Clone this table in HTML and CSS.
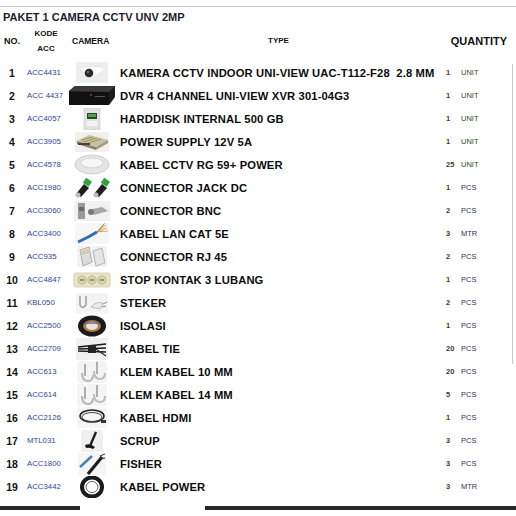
FILE: index.html
```html
<!DOCTYPE html>
<html>
<head>
<meta charset="utf-8">
<link rel="stylesheet" href="styles.css">
</head>
<body>
<div class="sheet">
  <div class="topline"></div>
  <div class="title">PAKET 1 CAMERA CCTV UNV 2MP</div>
  <table class="grid">
    <colgroup>
      <col class="c-no"><col class="c-code"><col class="c-cam"><col class="c-type"><col class="c-qn"><col class="c-unit">
    </colgroup>
    <thead>
      <tr>
        <th class="h-no">NO.</th>
        <th class="h-code">KODE<br>ACC</th>
        <th class="h-cam">CAMERA</th>
        <th class="h-type">TYPE</th>
        <th class="h-qty" colspan="2">QUANTITY</th>
      </tr>
    </thead>
    <tbody>
      <tr><td class="no">1</td><td class="code">ACC4431</td><td class="cam">
        <svg width="32" height="21" viewBox="0 0 32 21"><rect width="32" height="21" fill="#eeeeee"/><path d="M3 6 Q16 2 29 6 L27 9 Q16 20 5 9 Z" fill="#fbfbfb" stroke="#d8d8d8" stroke-width="0.6"/><circle cx="13" cy="11" r="4.3" fill="#2c2c2c"/><circle cx="12" cy="10" r="1.3" fill="#6a6a6a"/></svg>
      </td><td class="type">KAMERA CCTV INDOOR UNI-VIEW UAC-T112-F28&nbsp; 2.8 MM</td><td class="qn">1</td><td class="unit">UNIT</td></tr>
      <tr><td class="no">2</td><td class="code">ACC 4437</td><td class="cam">
        <svg width="46" height="21" viewBox="0 0 46 21"><path d="M0 6 L6 1 L46 1 L46 12 L40 20 L0 20 Z" fill="#1c1c1c"/><path d="M0 6 L6 1 L46 1 L40 7 Z" fill="#3a3a3a"/><path d="M0 7 L40 7 L40 20 L0 20 Z" fill="#111"/><circle cx="22" cy="10" r="0.9" fill="#c03030"/><rect x="26" y="11" width="10" height="1" fill="#555"/></svg>
      </td><td class="type">DVR 4 CHANNEL UNI-VIEW XVR 301-04G3</td><td class="qn">1</td><td class="unit">UNIT</td></tr>
      <tr><td class="no">3</td><td class="code">ACC4057</td><td class="cam">
        <svg width="18" height="22" viewBox="0 0 18 22"><rect x="1" y="0" width="16" height="22" fill="#e2e2e2" stroke="#c4c4c4" stroke-width="0.6"/><rect x="4" y="5" width="10" height="6" fill="#3a3a3a"/><rect x="5" y="6" width="8" height="3" fill="#3fae3a"/><rect x="4" y="13" width="10" height="5" fill="#f4f4f4"/></svg>
      </td><td class="type">HARDDISK INTERNAL 500 GB</td><td class="qn">1</td><td class="unit">UNIT</td></tr>
      <tr><td class="no">4</td><td class="code">ACC3905</td><td class="cam">
        <svg width="34" height="20" viewBox="0 0 34 20"><rect width="34" height="20" fill="#f2f0ea"/><path d="M2 9 L14 3 L33 8 L21 15 Z" fill="#c8c2a0"/><path d="M2 9 L21 15 L21 18 L2 12 Z" fill="#8c8470"/><path d="M21 15 L33 8 L33 11 L21 18 Z" fill="#a39c82"/><path d="M6 8 L18 5 M8 10 L22 6 M10 12 L26 7" stroke="#8a7a40" stroke-width="0.7"/><rect x="3" y="11" width="12" height="2" fill="#444"/></svg>
      </td><td class="type">POWER SUPPLY 12V 5A</td><td class="qn">1</td><td class="unit">UNIT</td></tr>
      <tr><td class="no">5</td><td class="code">ACC4578</td><td class="cam">
        <svg width="36" height="21" viewBox="0 0 36 21"><ellipse cx="18" cy="10.5" rx="17" ry="9.5" fill="#e6e6e6" stroke="#cfcfcf"/><ellipse cx="18" cy="9" rx="11" ry="5" fill="#f7f7f7" stroke="#d4d4d4"/></svg>
      </td><td class="type">KABEL CCTV RG 59+ POWER</td><td class="qn">25</td><td class="unit">UNIT</td></tr>
      <tr><td class="no">6</td><td class="code">ACC1980</td><td class="cam">
        <svg width="36" height="21" viewBox="0 0 36 21"><g><path d="M2 17 L10 7 L15 11 L7 20 Z" fill="#1e1e1e"/><rect x="10" y="2" width="7" height="6" fill="#2fa43a" transform="rotate(35 13 5)"/><circle cx="4" cy="18" r="2.5" fill="#bdbdbd"/></g><g transform="translate(18 0)"><path d="M2 17 L10 7 L15 11 L7 20 Z" fill="#1e1e1e"/><rect x="10" y="2" width="7" height="6" fill="#2fa43a" transform="rotate(35 13 5)"/><circle cx="4" cy="18" r="2.5" fill="#bdbdbd"/></g></svg>
      </td><td class="type">CONNECTOR JACK DC</td><td class="qn">1</td><td class="unit u2">PCS</td></tr>
      <tr><td class="no">7</td><td class="code">ACC3060</td><td class="cam">
        <svg width="36" height="20" viewBox="0 0 36 20"><rect width="36" height="20" fill="#f1f1f1"/><rect x="4" y="2" width="7" height="16" fill="#9a9a9a"/><rect x="5" y="6" width="5" height="4" fill="#6a6a6a"/><path d="M14 9 L28 6 L34 10 L20 14 Z" fill="#a8a8a8"/><circle cx="17" cy="11" r="3" fill="#777"/></svg>
      </td><td class="type">CONNECTOR BNC</td><td class="qn">2</td><td class="unit u2">PCS</td></tr>
      <tr><td class="no">8</td><td class="code">ACC3400</td><td class="cam">
        <svg width="34" height="21" viewBox="0 0 34 21"><rect width="34" height="21" fill="#f6f6f6"/><path d="M3 19 Q14 14 22 9" stroke="#2f6fc0" stroke-width="3" fill="none"/><path d="M22 9 L31 2 M22 9 L32 5 M22 9 L30 0 M22 9 L33 8" stroke="#e58a3a" stroke-width="0.8"/><path d="M22 9 L29 1" stroke="#3aa04a" stroke-width="0.8"/></svg>
      </td><td class="type">KABEL LAN CAT 5E</td><td class="qn">3</td><td class="unit u2">MTR</td></tr>
      <tr><td class="no">9</td><td class="code">ACC935</td><td class="cam">
        <svg width="30" height="21" viewBox="0 0 30 21"><rect width="30" height="21" fill="#f2f2f2"/><path d="M3 4 L12 1 L15 16 L6 20 Z" fill="#dcdcdc" stroke="#9a9a9a" stroke-width="0.7"/><path d="M16 5 L25 2 L28 17 L19 20 Z" fill="#e4e4e4" stroke="#a0a0a0" stroke-width="0.7"/><path d="M5 6 L11 4 M5 8 L12 6" stroke="#c9a040" stroke-width="0.6"/></svg>
      </td><td class="type">CONNECTOR RJ 45</td><td class="qn">2</td><td class="unit u2">PCS</td></tr>
      <tr><td class="no">10</td><td class="code">ACC4847</td><td class="cam">
        <svg width="38" height="20" viewBox="0 0 38 20"><rect x="1" y="3" width="36" height="14" rx="2" fill="#e8e4c6" stroke="#c9c4a0" stroke-width="0.7"/><circle cx="9" cy="10" r="4.2" fill="#d8d2a8" stroke="#a9a27a" stroke-width="0.6"/><circle cx="19" cy="10" r="4.2" fill="#d8d2a8" stroke="#a9a27a" stroke-width="0.6"/><circle cx="29" cy="10" r="4.2" fill="#d8d2a8" stroke="#a9a27a" stroke-width="0.6"/><circle cx="8" cy="10" r="0.9" fill="#777"/><circle cx="10" cy="10" r="0.9" fill="#777"/><circle cx="18" cy="10" r="0.9" fill="#777"/><circle cx="20" cy="10" r="0.9" fill="#777"/><circle cx="28" cy="10" r="0.9" fill="#777"/><circle cx="30" cy="10" r="0.9" fill="#777"/></svg>
      </td><td class="type">STOP KONTAK 3 LUBANG</td><td class="qn">1</td><td class="unit u2">PCS</td></tr>
      <tr><td class="no">11</td><td class="code">KBL050</td><td class="cam">
        <svg width="32" height="20" viewBox="0 0 32 20"><rect width="32" height="20" fill="#f3f3f3"/><path d="M4 3 L4 12 Q6 17 10 12 L10 3" stroke="#9a9a9a" fill="none" stroke-width="1.4"/><path d="M15 14 Q20 8 27 10 L24 16 Z" fill="#e9e9e9" stroke="#a9a9a9" stroke-width="0.7"/><path d="M27 11 L31 9 M26 14 L30 13" stroke="#888" stroke-width="0.9"/></svg>
      </td><td class="type">STEKER</td><td class="qn">2</td><td class="unit u2">PCS</td></tr>
      <tr><td class="no">12</td><td class="code">ACC2500</td><td class="cam">
        <svg width="30" height="22" viewBox="0 0 30 22"><ellipse cx="15" cy="11" rx="14" ry="10.5" fill="#1b1b1b"/><ellipse cx="15" cy="11" rx="9" ry="6" fill="#a47a4a"/><ellipse cx="15" cy="11" rx="6" ry="4" fill="#eae0cc"/><path d="M8 8 L22 8" stroke="#3b5fb0" stroke-width="1.2"/></svg>
      </td><td class="type">ISOLASI</td><td class="qn">1</td><td class="unit u2">PCS</td></tr>
      <tr><td class="no">13</td><td class="code">ACC2709</td><td class="cam">
        <svg width="32" height="22" viewBox="0 0 32 22"><rect width="32" height="22" fill="#f0f0f0"/><path d="M2 9 L30 6 M2 11 L30 10 M2 13 L30 14" stroke="#1a1a1a" stroke-width="1.4"/><rect x="12" y="7" width="8" height="8" fill="#222"/><path d="M20 11 L30 18" stroke="#2a2a2a" stroke-width="1.2"/></svg>
      </td><td class="type">KABEL TIE</td><td class="qn">20</td><td class="unit u2">PCS</td></tr>
      <tr><td class="no">14</td><td class="code">ACC613</td><td class="cam">
        <svg width="30" height="22" viewBox="0 0 30 22"><rect width="30" height="22" fill="#f4f4f4"/><path d="M5 12 Q5 20 11 20 Q16 20 16 14" stroke="#b7b7b7" stroke-width="2" fill="none"/><path d="M17 10 Q17 18 23 18 Q28 18 28 12" stroke="#bdbdbd" stroke-width="2" fill="none"/><path d="M8 3 L8 15 M20 1 L20 13" stroke="#8a8a8a" stroke-width="1.3"/></svg>
      </td><td class="type">KLEM KABEL 10 MM</td><td class="qn">20</td><td class="unit u2">PCS</td></tr>
      <tr><td class="no">15</td><td class="code">ACC614</td><td class="cam">
        <svg width="30" height="22" viewBox="0 0 30 22"><rect width="30" height="22" fill="#f4f4f4"/><path d="M5 12 Q5 20 11 20 Q16 20 16 14" stroke="#b7b7b7" stroke-width="2" fill="none"/><path d="M17 10 Q17 18 23 18 Q28 18 28 12" stroke="#bdbdbd" stroke-width="2" fill="none"/><path d="M8 3 L8 15 M20 1 L20 13" stroke="#8a8a8a" stroke-width="1.3"/></svg>
      </td><td class="type">KLEM KABEL 14 MM</td><td class="qn">5</td><td class="unit u2">PCS</td></tr>
      <tr><td class="no">16</td><td class="code">ACC2126</td><td class="cam">
        <svg width="30" height="21" viewBox="0 0 30 21"><rect width="30" height="21" fill="#f6f6f6"/><ellipse cx="15" cy="9" rx="12" ry="6" fill="none" stroke="#222" stroke-width="1.5"/><ellipse cx="15" cy="10" rx="10" ry="4.5" fill="none" stroke="#444" stroke-width="1"/><rect x="24" y="13" width="5" height="3" fill="#333"/></svg>
      </td><td class="type">KABEL HDMI</td><td class="qn">1</td><td class="unit u2">PCS</td></tr>
      <tr><td class="no">17</td><td class="code">MTL031</td><td class="cam">
        <svg width="22" height="22" viewBox="0 0 22 22"><rect width="22" height="22" fill="#f0f0f0"/><path d="M15 2 L9 16" stroke="#222" stroke-width="2.4"/><path d="M4 15 Q9 13 14 17 L12 19 Q8 17 5 18 Z" fill="#1a1a1a"/></svg>
      </td><td class="type">SCRUP</td><td class="qn">3</td><td class="unit u2">PCS</td></tr>
      <tr><td class="no">18</td><td class="code">ACC1800</td><td class="cam">
        <svg width="28" height="22" viewBox="0 0 28 22"><rect width="28" height="22" fill="#f5f5f5"/><path d="M2 14 L14 3" stroke="#4a7fb5" stroke-width="2.4"/><path d="M10 21 L24 4" stroke="#1b1b1b" stroke-width="3.2"/><path d="M22 3 L27 1 M23 6 L27 5" stroke="#333" stroke-width="1"/></svg>
      </td><td class="type">FISHER</td><td class="qn">3</td><td class="unit u2">PCS</td></tr>
      <tr><td class="no">19</td><td class="code">ACC3442</td><td class="cam">
        <svg width="24" height="22" viewBox="0 0 24 22"><ellipse cx="12" cy="11" rx="10" ry="9.5" fill="none" stroke="#1a1a1a" stroke-width="4"/><ellipse cx="12" cy="11" rx="6" ry="5.5" fill="none" stroke="#444" stroke-width="0.8"/></svg>
      </td><td class="type">KABEL POWER</td><td class="qn">3</td><td class="unit u2">MTR</td></tr>
    </tbody>
  </table>
  <div class="rightline"></div>
  <div class="bottombar">
    <div class="bar bar-a"></div>
    <div class="bar bar-gap"></div>
    <div class="bar bar-b"></div>
  </div>
</div>
</body>
</html>
```

FILE: styles.css
```css
html, body {
  margin: 0;
  padding: 0;
  background: #ffffff;
}
body {
  width: 516px;
  height: 516px;
  overflow: hidden;
  font-family: "Liberation Sans", Arial, sans-serif;
  color: #111;
}
.sheet {
  position: relative;
  width: 516px;
  height: 516px;
}
.topline {
  height: 6px;
  border-bottom: 1px solid #cfcfcf;
}
.title {
  margin: 4px 0 0 3px;
  font-weight: bold;
  font-size: 11px;
  line-height: 12px;
  color: #1c1c30;
}
.grid {
  border-collapse: collapse;
  table-layout: fixed;
  width: 516px;
  margin-top: 2px;
}
.c-no { width: 24px; }
.c-code { width: 42px; }
.c-cam { width: 51px; }
.c-type { width: 326px; }
.c-qn { width: 15px; }
.c-unit { width: 58px; }
th {
  font-weight: bold;
  padding: 0 0 5px 0;
  height: 31px;
  vertical-align: middle;
  color: #111;
}
.h-no { font-size: 9px; text-align: left; padding-left: 4px; }
.h-code { font-size: 8px; line-height: 15px; text-align: center; padding-left: 2px; }
.h-cam { font-size: 8.5px; text-align: left; padding-left: 6px; }
.h-type { font-size: 8px; text-align: left; padding-left: 151px; }
.h-qty { font-size: 11px; text-align: right; padding-right: 9px; }
td {
  height: 23px;
  padding: 0;
  vertical-align: middle;
  white-space: nowrap;
  overflow: hidden;
}
.no {
  font-weight: bold;
  font-size: 10.5px;
  text-align: center;
}
.code {
  font-size: 7.8px;
  color: #2e4496;
  padding-left: 3px;
}
.cam {
  text-align: center;
  line-height: 0;
}
.cam svg {
  display: inline-block;
  vertical-align: middle;
}
.type {
  font-weight: bold;
  font-size: 11.2px;
  letter-spacing: 0.15px;
  padding-left: 3px;
  color: #0c0c0c;
}
.qn {
  font-size: 7.5px;
  font-weight: bold;
  color: #4a3a18;
  padding-left: 3px;
}
.unit {
  font-size: 7.5px;
  color: #2f4a1c;
  padding-left: 3px;
}
.u2 {
  color: #2c3550;
}
.rightline {
  position: absolute;
  left: 512px;
  top: 64px;
  width: 1px;
  height: 300px;
  background: #c8c8c8;
}
.bottombar {
  position: absolute;
  left: 0;
  top: 506px;
  width: 516px;
  height: 4px;
  display: flex;
}
.bar { height: 4px; }
.bar-a { width: 80px; background: #2a2a2a; }
.bar-gap { width: 125px; background: #ffffff; }
.bar-b { flex: 1; background: #2a2a2a; }
```
